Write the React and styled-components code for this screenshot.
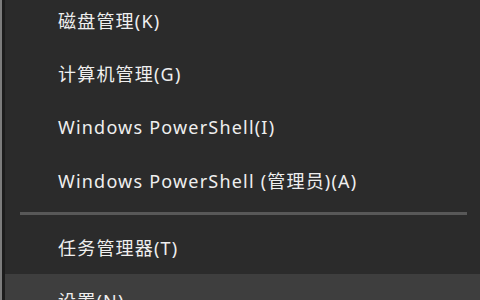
import React from 'react'
import styled, { createGlobalStyle } from 'styled-components'

const GlobalStyle = createGlobalStyle`
  html, body {
    margin: 0;
    padding: 0;
    background: #2b2b2b;
    overflow: hidden;
  }
`;

const Frame = styled.div`
  width: 480px;
  height: 300px;
  overflow: hidden;
  display: flex;
  background: #2b2b2b;
`;

const EdgeLight = styled.div`
  width: 2px;
  flex-shrink: 0;
  background: #7d7d7d;
`;

const EdgeDark = styled.div`
  width: 3px;
  flex-shrink: 0;
  background: #1c1c1c;
`;

const Menu = styled.div`
  flex: 1;
  display: flex;
  flex-direction: column;
  margin-top: -7px;
  font-family: "Noto Sans", "Noto Sans CJK SC", sans-serif;
  font-size: 18px;
  letter-spacing: 1.2px;
  color: #efefef;
`;

const Item = styled.div`
  height: 53.5px;
  flex-shrink: 0;
  display: flex;
  align-items: center;
  padding-left: 53px;
  white-space: nowrap;
  background: ${p => (p.hover ? '#3e3e3e' : 'transparent')};
`;

const Separator = styled.div`
  height: 3px;
  margin: 5px 13px 5px 15px;
  flex-shrink: 0;
  background: #585858;
`;

const items = [
  '磁盘管理(K)',
  '计算机管理(G)',
  'Windows PowerShell(I)',
  'Windows PowerShell (管理员)(A)',
]

export default function App() {
  return (
    <Frame>
      <GlobalStyle />
      <EdgeLight />
      <EdgeDark />
      <Menu>
        {items.map(label => <Item key={label}>{label}</Item>)}
        <Separator />
        <Item>任务管理器(T)</Item>
        <Item hover>设置(N)</Item>
      </Menu>
    </Frame>
  )
}
